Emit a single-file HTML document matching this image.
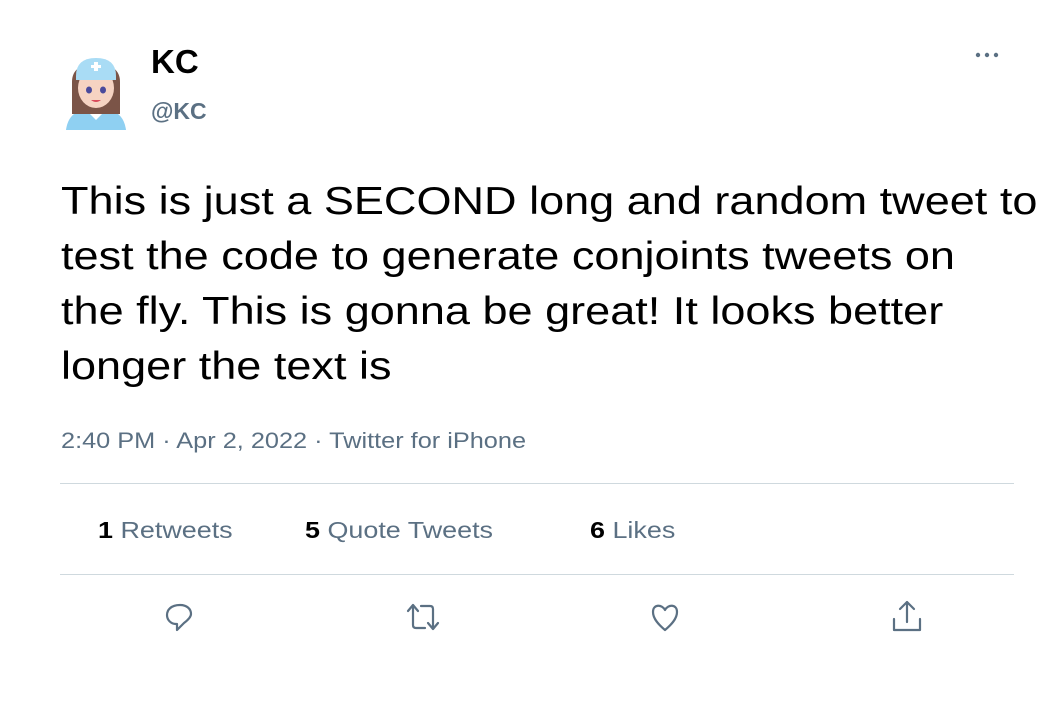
<!DOCTYPE html>
<html><head><style>
body{margin:0;width:1050px;height:702px;background:#fff;font-family:"Liberation Sans",Arial,sans-serif;position:relative;overflow:hidden}
.a{position:absolute;white-space:nowrap}
.s{transform:scaleX(1.17);transform-origin:0 0}
.g{color:#5b7083}
</style></head><body>
<svg class="a" style="left:62px;top:52px" width="68" height="78" viewBox="0 0 68 78">
<path d="M4 78 Q6 62 20 58 L48 58 Q62 62 64 78Z" fill="#8fd0f2"/>
<path d="M24 58 L34 68 L44 58Z" fill="#fff"/>
<rect x="28" y="50" width="12" height="10" fill="#f3c9b4"/>
<path d="M10 30 Q10 12 34 12 Q58 12 58 30 L58 62 L10 62Z" fill="#7b5447"/>
<ellipse cx="34" cy="36" rx="18" ry="20" fill="#f6d3c2"/>
<path d="M14 24 Q14 6 34 6 Q54 6 54 24 L54 28 L14 28Z" fill="#a9dcf5"/>
<path d="M32 10h4v3h3v3h-3v3h-4v-3h-3v-3h3z" fill="#fff"/>
<ellipse cx="27" cy="38" rx="3" ry="3.5" fill="#4a4a9c"/>
<ellipse cx="41" cy="38" rx="3" ry="3.5" fill="#4a4a9c"/>
<path d="M29 48 Q34 52 39 48Z" fill="#d94a5a"/>
</svg>
<div class="a" style="left:151px;top:43px;font-size:33px;font-weight:bold">KC</div>
<div class="a g" style="left:151px;top:98px;font-size:23px;font-weight:bold">@KC</div>
<svg class="a" style="left:974px;top:50px" width="28" height="10"><circle cx="4" cy="5" r="2.2" fill="#5b7083"/><circle cx="13" cy="5" r="2.2" fill="#5b7083"/><circle cx="22" cy="5" r="2.2" fill="#5b7083"/></svg>
<div class="a s" style="left:61px;top:174px;font-size:38.5px;line-height:55px">This is just a SECOND long and random tweet to<br>test the code to generate conjoints tweets on<br>the fly. This is gonna be great! It looks better<br>longer the text is</div>
<div class="a g s" style="left:61px;top:428px;font-size:22px;transform:scaleX(1.15)">2:40 PM · Apr 2, 2022 · Twitter for iPhone</div>
<div class="a" style="left:60px;top:483px;width:954px;height:1px;background:#cfd9de"></div>
<div class="a s" style="left:98px;top:517px;font-size:23px"><b>1</b> <span class="g">Retweets</span></div>
<div class="a s" style="left:305px;top:517px;font-size:23px"><b>5</b> <span class="g">Quote Tweets</span></div>
<div class="a s" style="left:590px;top:517px;font-size:23px"><b>6</b> <span class="g">Likes</span></div>
<div class="a" style="left:60px;top:574px;width:954px;height:1px;background:#cfd9de"></div>
<svg class="a" style="left:160px;top:597px" width="40" height="40" viewBox="0 0 40 40" fill="none" stroke="#5b7083" stroke-width="2.2" stroke-linejoin="round"><path d="M20 8 C11 8 7 13 7 18 C7 23 11 27 16 27 L17 27 L17 33 L24 26 C28 23 31 20 31 17 C31 12 27 8 20 8Z"/></svg>
<svg class="a" style="left:401px;top:597px" width="44" height="40" viewBox="0 0 44 40" fill="none" stroke="#5b7083" stroke-width="2.2" stroke-linecap="round" stroke-linejoin="round"><path d="M7 14 L12 8 L17 14 M12 8 V28 Q12 31 15 31 H24 M20 9 H29 Q32 9 32 12 V32 M27 26 L32 32 L37 26"/></svg>
<svg class="a" style="left:645px;top:597px" width="40" height="40" viewBox="0 0 40 40" fill="none" stroke="#5b7083" stroke-width="2.2" stroke-linejoin="round"><path d="M20 13 C17 7 8 7 8 15 C8 22 14 28 20 33 C26 28 32 22 32 15 C32 7 23 7 20 13Z"/></svg>
<svg class="a" style="left:887px;top:595px" width="40" height="42" viewBox="0 0 40 42" fill="none" stroke="#5b7083" stroke-width="2.2" stroke-linecap="round" stroke-linejoin="round"><path d="M20 27 V7 M13 14 L20 7 L27 14 M7 24 V35 H33 V24"/></svg>
</body></html>
